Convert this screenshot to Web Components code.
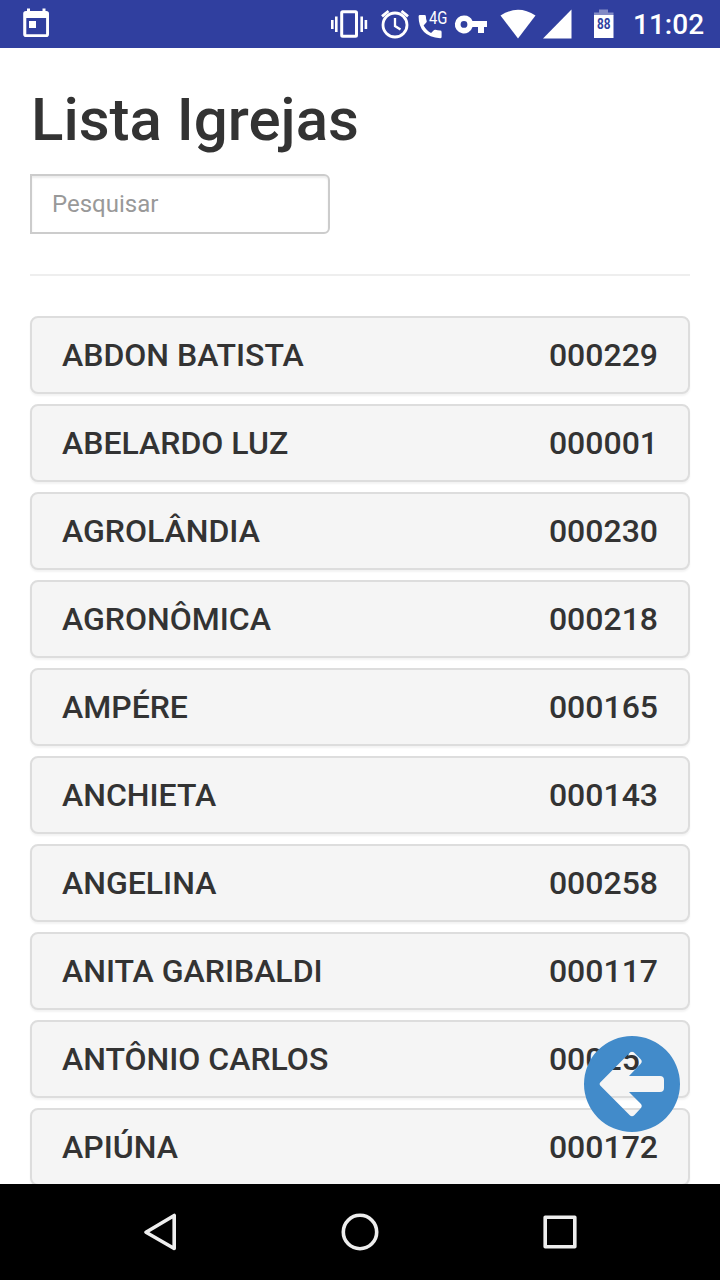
<!DOCTYPE html>
<html lang="pt-BR">
<head>
<meta charset="utf-8">
<title>Lista Igrejas</title>
<style>
body {
    margin: 0;
    font-family: Roboto, "Liberation Sans", sans-serif;
    color: #333;
    background-color: white;
}
</style>
</head>
<body>
<app-screen>
    <status-bar slot="status" time="11:02" battery="88"></status-bar>
    <page-header>Lista Igrejas</page-header>
    <search-box placeholder="Pesquisar"></search-box>
    <church-list></church-list>
    <back-button slot="floating"></back-button>
    <nav-bar slot="nav"></nav-bar>
</app-screen>

<script>
class AppScreen extends HTMLElement {

    connectedCallback() {
        this.attachShadow({ mode: "open" }).innerHTML = `
        <style>
        :host {
            display: flex;
            flex-direction: column;
            position: relative;
            height: 1280px;
            width: 720px;
            overflow: hidden;
        }

        main {
            flex: 1;
            min-height: 0;
            overflow: hidden;
            padding: 0 30px;
        }
        </style>
        <slot name="status"></slot>
        <main><slot></slot></main>
        <slot name="nav"></slot>
        <slot name="floating"></slot>
        `;
    }
}

class StatusBar extends HTMLElement {

    connectedCallback() {
        this.attachShadow({ mode: "open" }).innerHTML = `
        <style>
        :host {
            display: flex;
            flex: none;
            justify-content: space-between;
            height: 48px;
            background-color: #303f9f;
            color: white;
        }

        .icons {
            display: flex;
        }

        svg {
            display: block;
            fill: white;
            font-family: Roboto, sans-serif;
        }

        .time {
            width: 87px;
            font-size: 28px;
            font-weight: 500;
            line-height: 50px;
            white-space: nowrap;
        }
        </style>
        <svg width="60" height="48" viewBox="0 0 60 48">
            <path fill-rule="evenodd" d="M27 8.500h3v2.500h12.500V8.500h3v2.500h.7q2.800 0 2.800 2.800v20.400q0 2.800-2.800 2.800H26q-2.800 0-2.800-2.800V13.800q0-2.800 2.800-2.800h1zM26.300 18v16.200h19.800V18zM29 21h7v7h-7z"/>
        </svg>
        <div class="icons">
            <svg width="303" height="48" viewBox="330 0 303 48">
                <!-- vibrate -->
                <path d="M331 20h2.600v9h-2.600zM335 16.500h2.600v15.500h-2.600zM360.400 16.500h2.600v15.500h-2.600zM364.600 20h2.600v9h-2.600z"/>
                <rect x="341.700" y="11.700" width="14.800" height="24.600" rx="1" fill="none" stroke="white" stroke-width="3"/>
                <!-- alarm -->
                <g fill="none" stroke="white" stroke-width="2.800">
                    <circle cx="395" cy="25" r="12"/>
                    <path d="M395 18v8l5.500 3.500" stroke-width="2.300"/>
                    <path d="M382 16.300l6.500-5.300M408 16.300l-6.500-5.300"/>
                </g>
                <!-- phone -->
                <path d="M420 15h4.500q1.400 0 1.400 1.400 0 2.300.8 4.600.3.900-.4 1.600l-2.700 2.800q3 5.300 7.500 7.500l2.700-2.700q.7-.7 1.600-.4 2.300.8 4.800.8 1.400 0 1.400 1.400v5q0 1.300-1.400 1.300-21.600-2-21.600-21.900 0-1.400 1.400-1.400z"/>
                <text x="429" y="23.800" font-size="17.500" textLength="18.500" lengthAdjust="spacingAndGlyphs">4G</text>
                <!-- vpn key -->
                <path fill-rule="evenodd" d="M464 15.500a9 9 0 0 1 8.500 5.500H487v6h-3v6h-6v-6h-5.500a9 9 0 1 1-8.500-11.500zM464 21a3.400 3.400 0 1 0 0 6.800 3.400 3.400 0 0 0 0-6.800z"/>
                <!-- wifi -->
                <path d="M500.500 15.500q17.500-11.500 35 0L518 38.500z"/>
                <!-- signal -->
                <path d="M571.500 9.500v29H543z"/>
                <!-- battery -->
                <path d="M599 9.500h9v3h5.500v3h-19.500v-3h5z" opacity=".4"/>
                <path d="M594 15h19.500v23H594z"/>
                <text x="597" y="29" font-size="14.500" font-weight="700" textLength="13.500" lengthAdjust="spacingAndGlyphs" style="fill:#303f9f">${this.getAttribute("battery")}</text>
            </svg>
            <div class="time">${this.getAttribute("time")}</div>
        </div>
        `;
    }
}

class PageHeader extends HTMLElement {

    connectedCallback() {
        this.attachShadow({ mode: "open" }).innerHTML = `
        <style>
        :host {
            display: block;
        }

        h1 {
            margin: 0;
            padding: 39px 0 0 1px;
            font-size: 60px;
            font-weight: 500;
            line-height: 66px;
            white-space: nowrap;
        }
        </style>
        <h1><slot></slot></h1>
        `;
    }
}

class SearchBox extends HTMLElement {

    connectedCallback() {
        this.attachShadow({ mode: "open" }).innerHTML = `
        <style>
        :host {
            display: block;
            margin-top: 21px;
            padding-bottom: 40px;
            border-bottom: 2px solid #eee;
        }

        input {
            display: block;
            box-sizing: border-box;
            width: 300px;
            height: 60px;
            padding: 0 20px;
            border: 2px solid #ccc;
            border-radius: 0 6px 6px 0;
            box-shadow: inset 0 2px 2px rgba(0, 0, 0, 0.075);
            background-color: white;
            font-family: inherit;
            font-size: 24px;
            outline: 0;
        }

        input::placeholder {
            color: #999;
            opacity: 1;
        }
        </style>
        <input type="text" placeholder="${this.getAttribute("placeholder")}">
        `;
    }
}

class ChurchItem extends HTMLElement {

    connectedCallback() {
        this.attachShadow({ mode: "open" }).innerHTML = `
        <style>
        :host {
            display: flex;
            justify-content: space-between;
            align-items: center;
            box-sizing: border-box;
            height: 78px;
            padding: 0 30px;
            border: 2px solid #ddd;
            border-radius: 8px;
            background-color: #f5f5f5;
            box-shadow: 0 2px 2px rgba(0, 0, 0, 0.05);
            font-size: 32px;
            font-weight: 500;
            line-height: 36px;
            white-space: nowrap;
        }
        </style>
        <span><slot></slot></span>
        <span>${this.getAttribute("code")}</span>
        `;
    }
}

class ChurchList extends HTMLElement {

    get churches() {
        return [
            ["ABDON BATISTA", "000229"],
            ["ABELARDO LUZ", "000001"],
            ["AGROLÂNDIA", "000230"],
            ["AGRONÔMICA", "000218"],
            ["AMPÉRE", "000165"],
            ["ANCHIETA", "000143"],
            ["ANGELINA", "000258"],
            ["ANITA GARIBALDI", "000117"],
            ["ANTÔNIO CARLOS", "000251"],
            ["APIÚNA", "000172"]
        ];
    }

    connectedCallback() {
        this.attachShadow({ mode: "open" }).innerHTML = `
        <style>
        :host {
            display: flex;
            flex-direction: column;
            gap: 10px;
            margin-top: 40px;
        }
        </style>
        ${this.churches.map(([name, code]) => `<church-item code="${code}">${name}</church-item>`).join("")}
        `;
    }
}

class BackButton extends HTMLElement {

    connectedCallback() {
        this.attachShadow({ mode: "open" }).innerHTML = `
        <style>
        :host {
            position: absolute;
            right: 40px;
            bottom: 148px;
            width: 96px;
            height: 96px;
            cursor: pointer;
        }

        svg {
            display: block;
        }
        </style>
        <svg width="96" height="96" viewBox="0 0 96 96">
            <path fill="#428bca" fill-rule="evenodd" d="M48 0a48 48 0 1 1 0 96a48 48 0 0 1 0-96zM16.200 46.500L45.500 17Q48 14.500 50.500 17L56.500 23Q59 25.500 56.500 28L45 40H76Q80 40 80 44V52Q80 56 76 56H45L56.500 67.500Q59 70 56.500 72.500L50.500 79Q48 81.500 45.500 79L16.200 49.500Q14.800 48 16.200 46.500z"/>
        </svg>
        `;
    }
}

class NavBar extends HTMLElement {

    connectedCallback() {
        this.attachShadow({ mode: "open" }).innerHTML = `
        <style>
        :host {
            display: flex;
            flex: none;
            justify-content: center;
            align-items: center;
            gap: 152px;
            height: 96px;
            background-color: black;
        }

        svg {
            fill: none;
            stroke: #eee;
            stroke-width: 3.6;
            stroke-linejoin: round;
        }
        </style>
        <svg width="48" height="48"><path d="M38.200 7.500v33L10 24.200z"/></svg>
        <svg width="48" height="48"><circle cx="24" cy="24" r="16.700"/></svg>
        <svg width="48" height="48"><rect x="9.200" y="9.200" width="29.600" height="29.600"/></svg>
        `;
    }
}

customElements.define("app-screen", AppScreen);
customElements.define("status-bar", StatusBar);
customElements.define("page-header", PageHeader);
customElements.define("search-box", SearchBox);
customElements.define("church-item", ChurchItem);
customElements.define("church-list", ChurchList);
customElements.define("back-button", BackButton);
customElements.define("nav-bar", NavBar);
</script>
</body>
</html>
